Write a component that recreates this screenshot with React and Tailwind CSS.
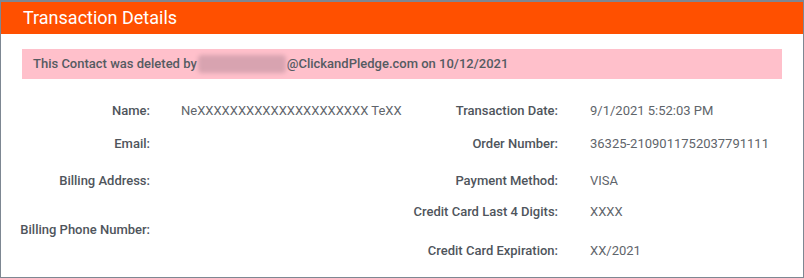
export default function App() {
  const label = "text-right font-medium text-[#4f555c] whitespace-nowrap";
  const value = "text-[#5f656b] whitespace-nowrap";

  return (
    <div className="w-[804px] h-[278px] border border-t-2 border-[#7d8792] bg-white font-['Roboto',sans-serif] text-[13px] leading-[16px]">
      {/* header */}
      <div className="h-[32px] bg-[#ff5000] pl-[22px] flex items-center">
        <h1 className="text-white text-[18px] leading-none">Transaction Details</h1>
      </div>

      {/* deleted notice */}
      <div className="mx-[21px] mt-[15px] h-[30px] bg-[#ffc0cb] pl-[11px] flex items-center font-medium text-[#555b62]">
        <span>This Contact was deleted by</span>
        <span className="inline-block w-[88px] h-[18px] mx-[1px] bg-[#d8a3b0] rounded-sm blur-[2px]"></span>
        <span>@ClickandPledge.com on 10/12/2021</span>
      </div>

      {/* details */}
      <div className="mt-[24px] grid grid-cols-[149px_31px_200px_177px_32px_1fr] grid-rows-[33px_37px_31px_39px_20px] items-start">
        <div className={label}>Name:</div>
        <div></div>
        <div className={value}>NeXXXXXXXXXXXXXXXXXXXXX TeXX</div>
        <div className={label}>Transaction Date:</div>
        <div></div>
        <div className={value}>9/1/2021 5:52:03 PM</div>

        <div className={label}>Email:</div>
        <div></div>
        <div className={value}></div>
        <div className={label}>Order Number:</div>
        <div></div>
        <div className={value}>36325-2109011752037791111</div>

        <div className={label}>Billing Address:</div>
        <div></div>
        <div className={value}></div>
        <div className={label}>Payment Method:</div>
        <div></div>
        <div className={value}>VISA</div>

        <div className={`${label} row-span-2 mt-[18px]`}>Billing Phone Number:</div>
        <div className="row-span-2"></div>
        <div className={`${value} row-span-2`}></div>
        <div className={label}>Credit Card Last 4 Digits:</div>
        <div></div>
        <div className={value}>XXXX</div>

        <div className={label}>Credit Card Expiration:</div>
        <div></div>
        <div className={value}>XX/2021</div>
      </div>
    </div>
  );
}
